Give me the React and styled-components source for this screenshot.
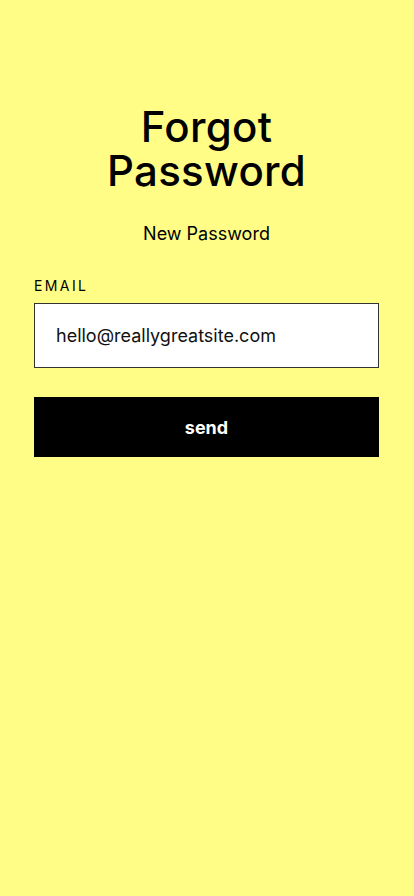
import React from 'react';
import styled, { createGlobalStyle } from 'styled-components';

const GlobalStyle = createGlobalStyle`
  html, body {
    margin: 0;
    padding: 0;
    background: #fffd86;
  }
  * { box-sizing: border-box; }
`;

const Page = styled.div`
  width: 414px;
  min-height: 896px;
  background: #fffd86;
  font-family: 'Inter', 'Liberation Sans', sans-serif;
  color: #000;
  padding: 105px 35px 0 34px;
  display: flex;
  flex-direction: column;
`;

const Title = styled.h1`
  margin: 0;
  text-align: center;
  font-size: 42px;
  font-weight: 500;
  line-height: 44px;
  letter-spacing: 0.3px;
`;

const Subtitle = styled.p`
  margin: 29px 0 0;
  text-align: center;
  font-size: 18px;
  line-height: 24px;
`;

const Label = styled.label`
  margin-top: 31px;
  font-size: 14px;
  letter-spacing: 2.4px;
  line-height: 18px;
`;

const Input = styled.div`
  margin-top: 8px;
  height: 65px;
  background: #fff;
  border: 1px solid #333;
  display: flex;
  align-items: center;
  padding: 0 21px;
  font-size: 18px;
  color: #111;
`;

const Button = styled.button`
  margin-top: 29px;
  height: 60px;
  border: none;
  background: #000;
  color: #fff;
  font-family: inherit;
  font-size: 18px;
  font-weight: 700;
`;

export default function App() {
  return (
    <>
      <GlobalStyle />
      <Page>
        <Title>Forgot<br />Password</Title>
        <Subtitle>New Password</Subtitle>
        <Label>EMAIL</Label>
        <Input>hello@reallygreatsite.com</Input>
        <Button>send</Button>
      </Page>
    </>
  );
}
